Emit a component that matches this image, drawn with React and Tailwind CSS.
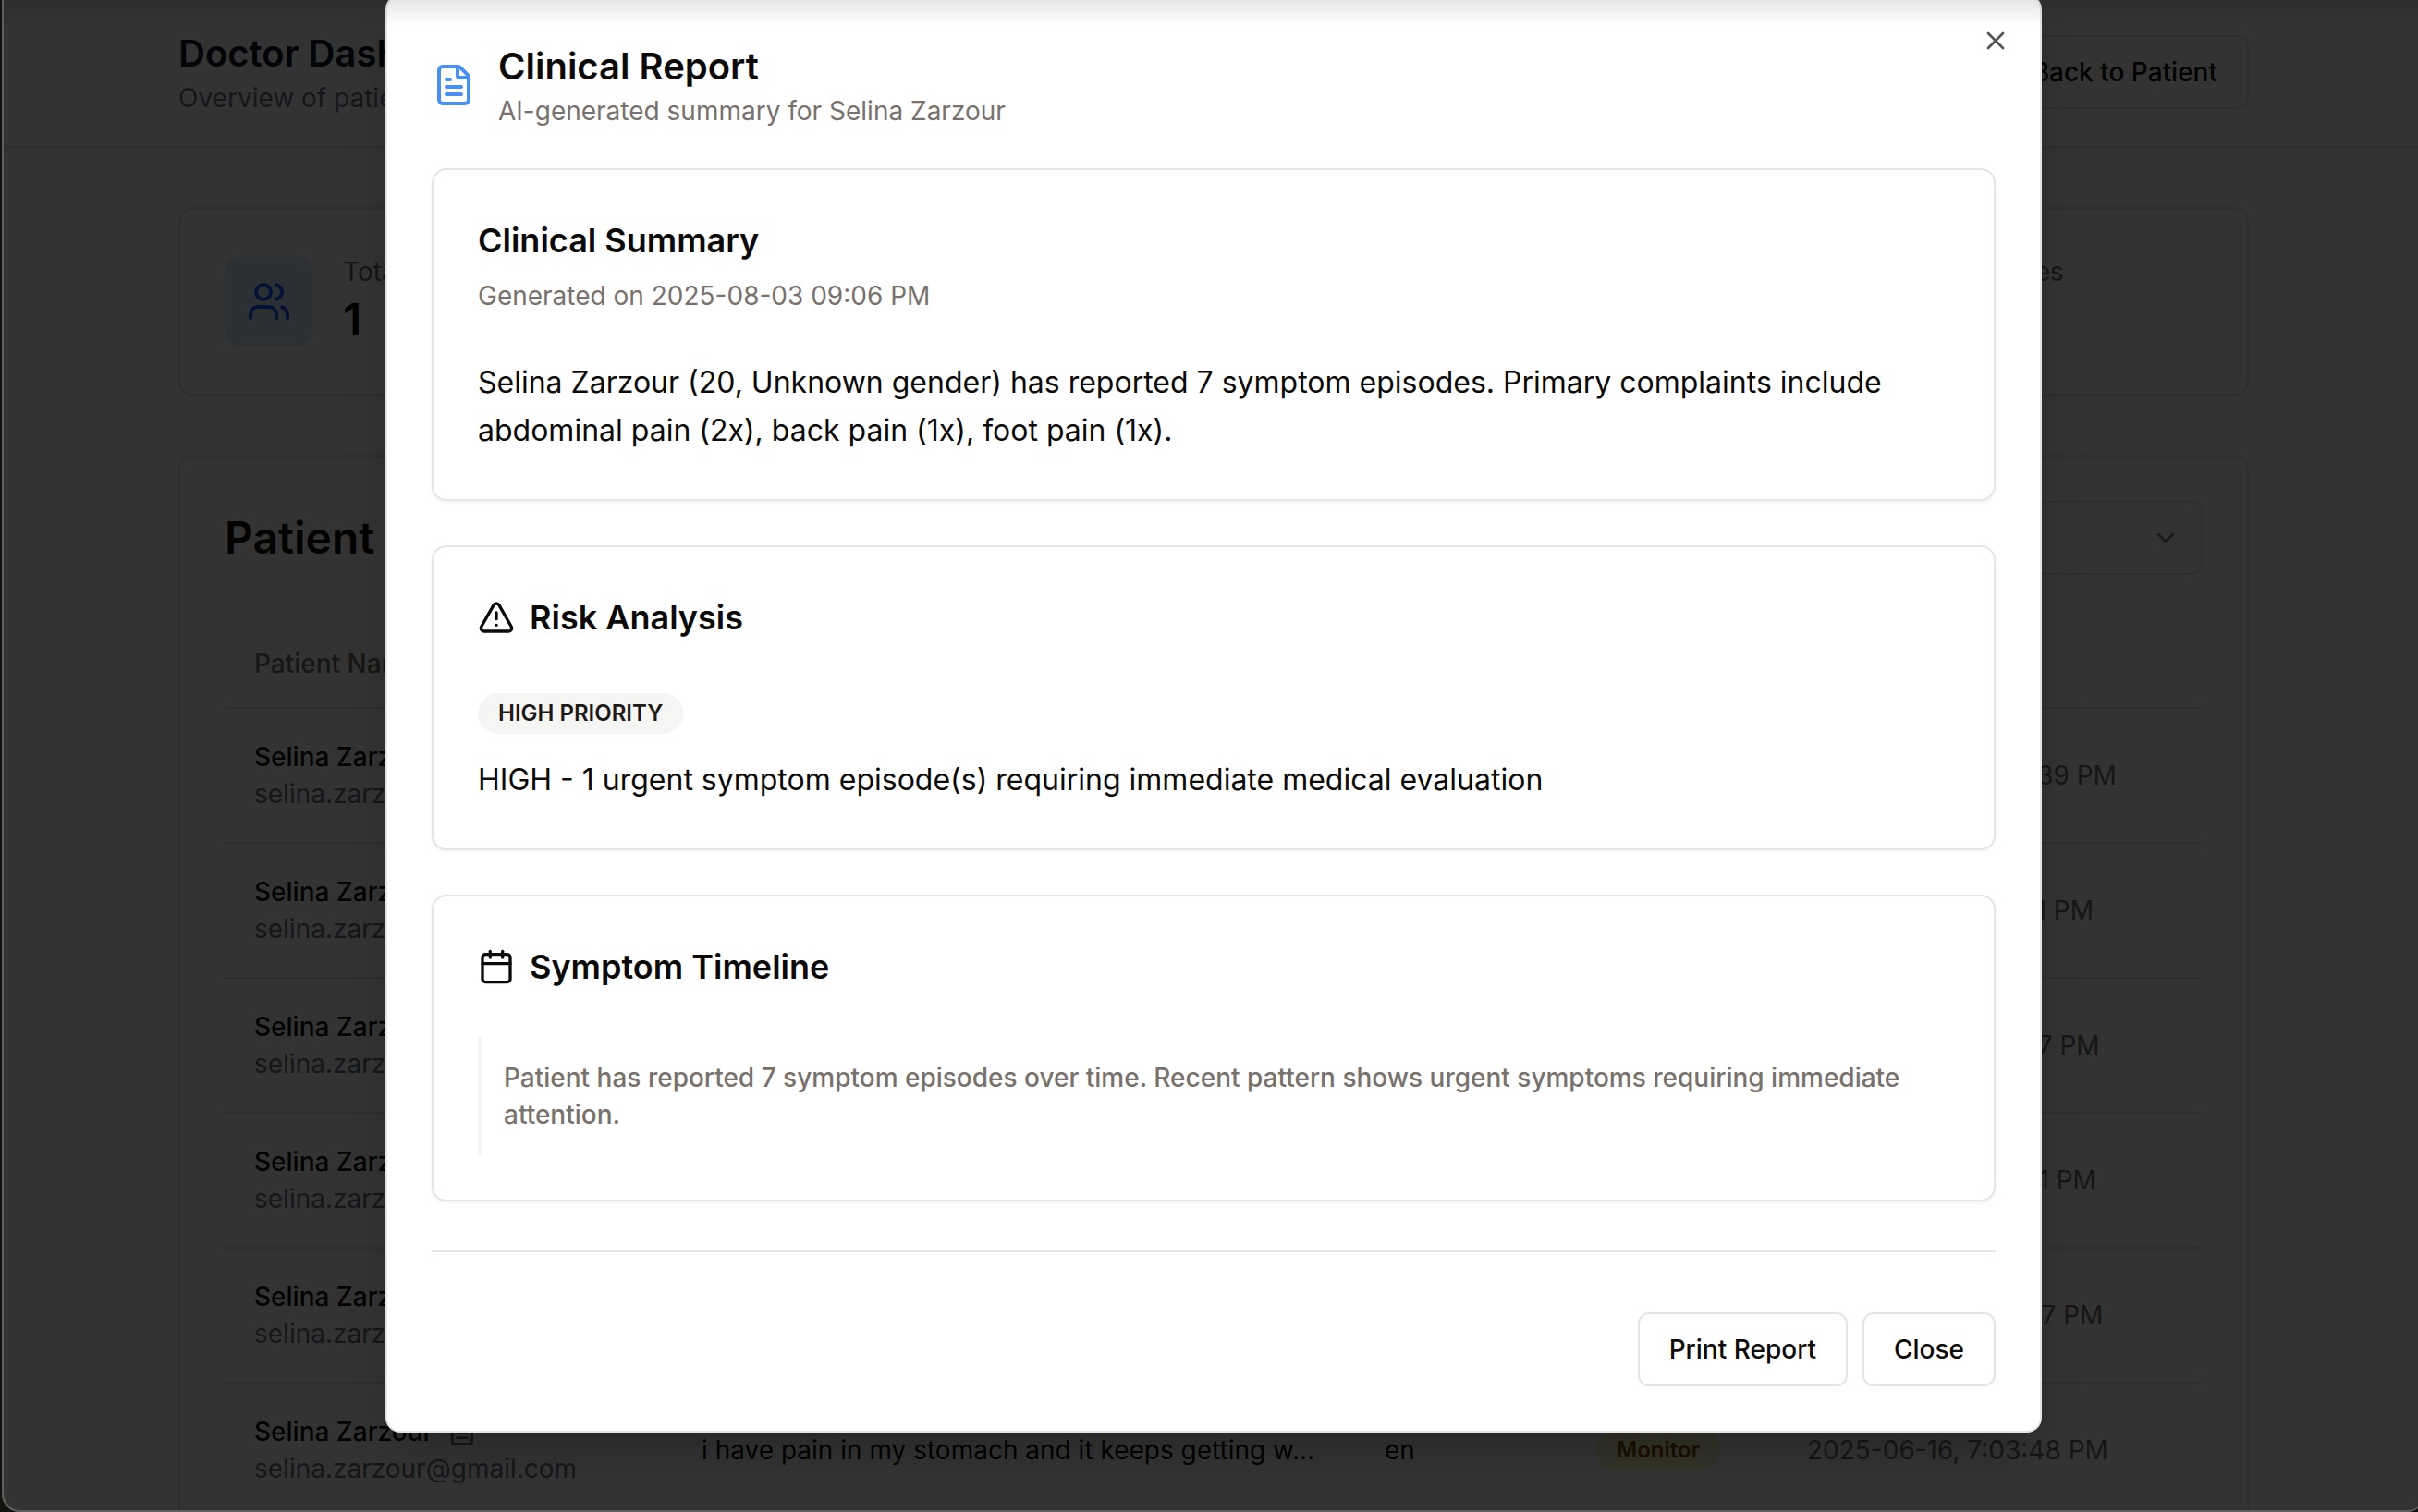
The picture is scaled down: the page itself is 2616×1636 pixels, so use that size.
import { AlertTriangle, Calendar, ChevronDown, FileText, Users, X } from 'lucide-react';

const stats = [
  { label: 'Total Patients', value: '1' },
  { label: 'Total Reports', value: '6' },
  { label: 'Urgent Cases', value: '1' },
  { label: 'Languages', value: '1' },
];

const rows = [
  { text: 'i have pain in my stomach', status: 'Urgent', date: '2025-08-02, 9:43:39 PM' },
  { text: 'my back hurts', status: 'Monitor', date: '2025-07-21, 7:12:21 PM' },
  { text: 'my foot hurts', status: 'Monitor', date: '2025-06-20, 7:11:37 PM' },
  { text: 'i have pain in my stomach', status: 'Monitor', date: '2025-06-18, 7:13:21 PM' },
  { text: 'i feel dizzy', status: 'Monitor', date: '2025-06-16, 7:07:27 PM' },
  { text: 'i have pain in my stomach and it keeps getting w…', status: 'Monitor', date: '2025-06-16, 7:03:48 PM' },
];

function Card({ className = '', children }) {
  return (
    <section className={`rounded-2xl border-2 border-[#e5e5e5] bg-white shadow-[0_2px_4px_rgba(0,0,0,0.05)] ${className}`}>
      {children}
    </section>
  );
}

function OutlineButton({ children }) {
  return (
    <button type="button" className="flex h-20 items-center gap-4 rounded-xl border-2 border-[#e5e5e5] bg-white px-8 text-[28px] leading-10 font-medium text-[#0c0a09]">
      {children}
    </button>
  );
}

function Dashboard() {
  return (
    <div className="min-h-full bg-white text-[#0c0a09]">
      <header className="border-b-2 border-[#e5e5e5] pt-[30px] pb-8 shadow-[0_2px_4px_rgba(0,0,0,0.05)]">
        <div className="mx-auto flex max-w-[2304px] items-center justify-between px-8">
          <div>
            <h1 className="text-[40px] leading-14 font-semibold text-[#111827]">Doctor Dashboard</h1>
            <p className="text-[28px] leading-10 text-[#6b7280]">Overview of patient symptoms</p>
          </div>
          <OutlineButton>Back to Patient</OutlineButton>
        </div>
      </header>
      <main className="mx-auto flex max-w-[2304px] flex-col gap-16 px-8 pt-16">
        <div className="grid grid-cols-4 gap-12">
          {stats.map((s) => (
            <Card key={s.label} className="flex items-center gap-8 p-12">
              <div className="flex size-24 items-center justify-center rounded-2xl bg-blue-100 text-blue-600">
                <Users className="size-12" />
              </div>
              <div>
                <p className="text-[28px] leading-10 text-[#78716c]">{s.label}</p>
                <p className="text-5xl leading-16 font-semibold">{s.value}</p>
              </div>
            </Card>
          ))}
        </div>
        <Card className="p-12">
          <div className="flex items-center justify-between">
            <h2 className="text-5xl font-semibold">Patient Reports</h2>
            <div className="relative">
              <select aria-label="Filter by status" className="h-20 w-[360px] appearance-none rounded-xl border-2 border-[#e5e5e5] bg-white px-6 text-[28px]">
                <option>All Statuses</option>
              </select>
              <ChevronDown className="pointer-events-none absolute top-6 right-6 size-8 opacity-50" />
            </div>
          </div>
          <table className="mt-12 w-full table-fixed text-left text-[28px] leading-10">
            <colgroup>
              <col className="w-[484px]" />
              <col />
              <col className="w-[229px]" />
              <col className="w-[228px]" />
              <col className="w-[460px]" />
            </colgroup>
            <thead>
              <tr className="h-24 border-b-2 border-[#e5e5e5] text-[#78716c]">
                {['Patient Name', 'Symptoms', 'Language', 'Status', 'Date'].map((h) => (
                  <th key={h} scope="col" className="px-8 font-medium">{h}</th>
                ))}
              </tr>
            </thead>
            <tbody>
              {rows.map((r) => (
                <tr key={r.date} className="border-b-2 border-[#e5e5e5]">
                  <td className="p-8">
                    <div className="flex items-center gap-4 font-medium">
                      Selina Zarzour
                      <FileText className="size-8 text-[#78716c]" />
                    </div>
                    <div className="text-[#6b7280]">selina.zarzour@gmail.com</div>
                  </td>
                  <td className="p-8 whitespace-nowrap">{r.text}</td>
                  <td className="p-8">en</td>
                  <td className="p-8">
                    <span className="inline-flex rounded-full border-2 border-transparent bg-yellow-100 px-5 py-1 text-2xl leading-8 font-semibold text-yellow-800">{r.status}</span>
                  </td>
                  <td className="p-8 whitespace-nowrap text-[#78716c]">{r.date}</td>
                </tr>
              ))}
            </tbody>
          </table>
        </Card>
      </main>
    </div>
  );
}

function ReportDialog() {
  return (
    <div role="dialog" aria-labelledby="report-title" className="relative -mt-1.5 w-full max-w-[1792px] rounded-2xl border-2 border-[#e5e5e5] bg-white p-12 text-[#0c0a09] shadow-2xl">
      <button type="button" aria-label="Close dialog" className="absolute top-8 right-8 opacity-70">
        <X className="size-8" />
      </button>
      <div className="flex items-center gap-6">
        <FileText className="size-12 text-[#4a90ec]" />
        <div>
          <h2 id="report-title" className="text-[40px] leading-14 font-semibold">Clinical Report</h2>
          <p className="text-[28px] leading-10 text-[#78716c]">AI-generated summary for Selina Zarzour</p>
        </div>
      </div>
      <div className="mt-[42px] flex flex-col gap-12">
        <Card className="p-12">
          <h3 className="text-4xl leading-14 font-semibold">Clinical Summary</h3>
          <p className="mt-3 text-[28px] leading-10 text-[#78716c]">Generated on 2025-08-03 09:06 PM</p>
          <p className="mt-12 text-[32px] leading-13">
            Selina Zarzour (20, Unknown gender) has reported 7 symptom episodes. Primary complaints include abdominal pain (2x), back pain (1x), foot pain (1x).
          </p>
        </Card>
        <Card className="p-12">
          <h3 className="flex items-center gap-4 text-4xl leading-14 font-semibold">
            <AlertTriangle className="size-10" />
            Risk Analysis
          </h3>
          <div className="mt-[54px] flex">
            <span className="rounded-full border-2 border-transparent bg-[#f5f5f4] px-5 py-1 text-2xl leading-8 font-semibold text-[#1c1917]">HIGH PRIORITY</span>
          </div>
          <p className="mt-6 text-[32px] leading-13">HIGH - 1 urgent symptom episode(s) requiring immediate medical evaluation</p>
        </Card>
        <Card className="p-12">
          <h3 className="flex items-center gap-4 text-4xl leading-14 font-semibold">
            <Calendar className="size-10" />
            Symptom Timeline
          </h3>
          <p className="mt-12 border-l-4 border-[#f5f5f4] py-6 pl-6 text-[28px] leading-10 font-medium text-[#78716c]">
            Patient has reported 7 symptom episodes over time. Recent pattern shows urgent symptoms requiring immediate attention.
          </p>
        </Card>
      </div>
      <hr className="mt-[53px] mb-[65px] border-t-2 border-[#e5e5e5]" />
      <div className="flex justify-end gap-4">
        <OutlineButton>Print Report</OutlineButton>
        <OutlineButton>Close</OutlineButton>
      </div>
    </div>
  );
}

export default function App() {
  return (
    <div className="h-screen overflow-hidden bg-[#10140c] pl-0.5 font-['Inter',sans-serif]">
      <div className="relative -mr-2 h-full overflow-hidden rounded-b-[20px]">
        <Dashboard />
        <div className="absolute inset-0 flex items-start justify-center bg-black/80">
          <ReportDialog />
        </div>
        <div className="pointer-events-none absolute inset-x-0 top-0 h-7 bg-linear-to-b from-black/10 to-transparent" />
        <div className="pointer-events-none absolute inset-0 rounded-b-[20px] border-b-2 border-l-2 border-[#5e5e5e]" />
      </div>
    </div>
  );
}
